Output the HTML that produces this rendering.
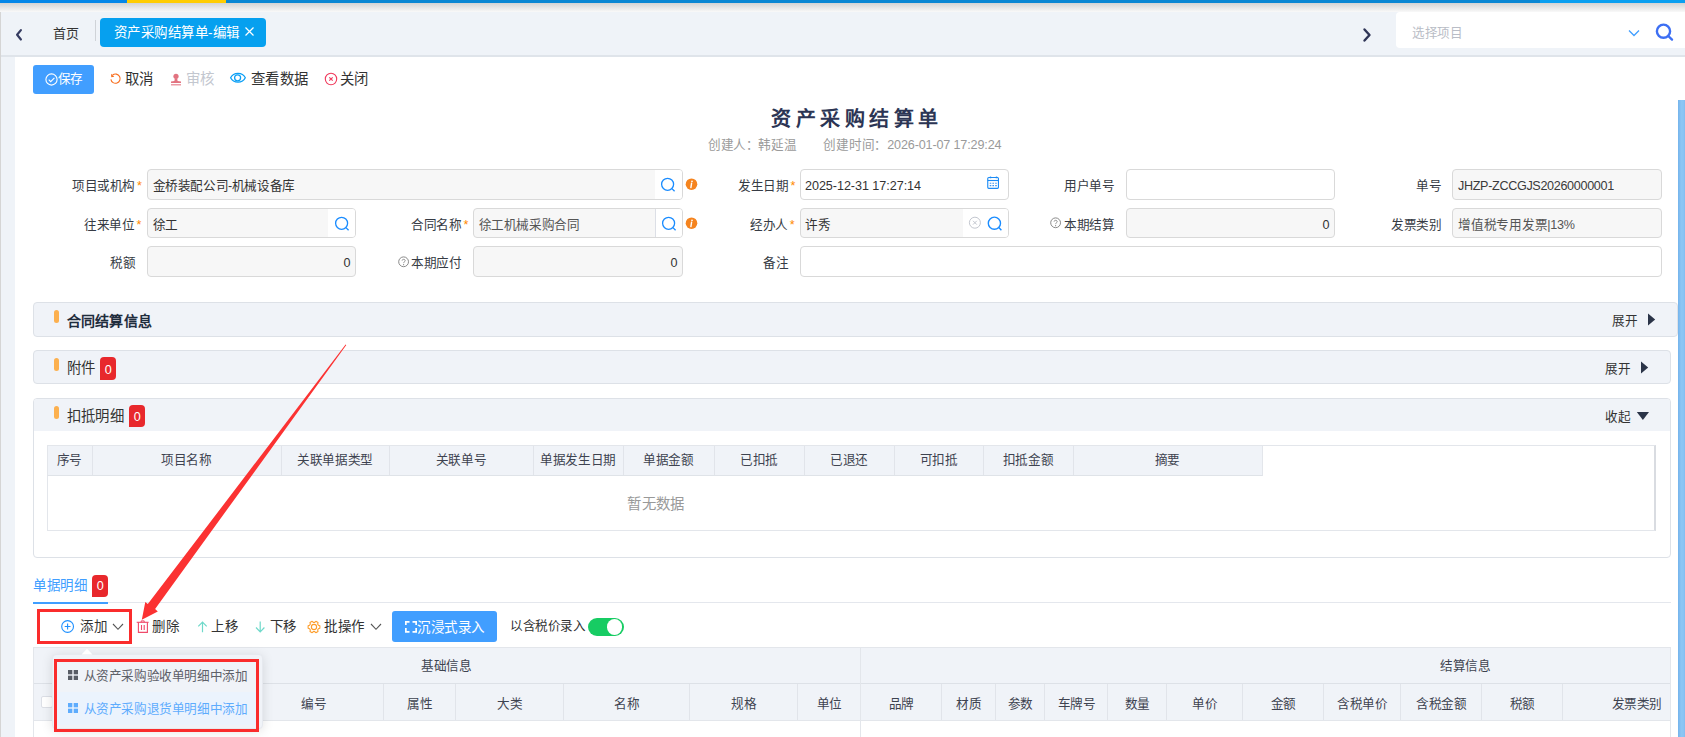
<!DOCTYPE html>
<html lang="zh-CN"><head><meta charset="utf-8">
<style>
html,body{margin:0;padding:0;}
body{width:1685px;height:737px;overflow:hidden;position:relative;background:#eff3f8;font-family:"Liberation Sans",sans-serif;color:#333;}
.a{position:absolute;}
.t{position:absolute;white-space:nowrap;line-height:20px;font-size:12.6px;letter-spacing:-0.4px;}
svg{position:absolute;overflow:visible;}
.inp{position:absolute;box-sizing:border-box;border:1px solid #d9d9d9;border-radius:4px;background:#f7f7f7;overflow:hidden;}
.inp.w{background:#fff;}
.lbl{position:absolute;white-space:nowrap;line-height:20px;font-size:12.6px;letter-spacing:-0.4px;color:#363b44;}
.req{color:#ff8a00;margin-left:2px;}
.th{position:absolute;white-space:nowrap;line-height:20px;font-size:12.6px;letter-spacing:-0.4px;color:#3e4350;}
</style></head><body>
<!-- top bar -->
<div class="a" style="left:0;top:0;width:127px;height:3px;background:#0587e8"></div>
<div class="a" style="left:127px;top:0;width:99px;height:3px;background:#ffcc00"></div>
<div class="a" style="left:226px;top:0;width:1314px;height:3px;background:#0a87d3"></div>
<div class="a" style="left:1540px;top:0;width:145px;height:3px;background:#0a9ff0"></div>
<div class="a" style="left:0;top:3px;width:1685px;height:9px;background:linear-gradient(#d3d3d3,#f9f9f9)"></div>
<div class="a" style="left:0;top:55px;width:1685px;height:2px;background:#dfe4ea"></div>
<div class="a" style="left:0;top:12px;width:1px;height:725px;background:#d5d5d5"></div>
<!-- content -->
<div class="a" style="left:15px;top:57px;width:1670px;height:680px;background:#fff"></div>
<div class="a" style="left:1678px;top:100px;width:7px;height:637px;background:linear-gradient(to right,#74b3ec,#8cc6f4 45%,#8ac5f4 75%,#82bdf0)"></div>

<!-- tab bar -->
<svg style="left:15px;top:28px" width="9" height="14" viewBox="0 0 9 14"><path d="M5.9 2.1 L2.1 6.8 L5.9 11.5" fill="none" stroke="#363c61" stroke-width="2.2" stroke-linecap="round" stroke-linejoin="round"/></svg>
<div class="t" style="left:53px;top:23.5px;font-size:13px;letter-spacing:0px;color:#333">首页</div>
<div class="a" style="left:95px;top:20px;width:1px;height:21px;background:#cfd3d8"></div>
<div class="a" style="left:100px;top:18px;width:166px;height:29px;background:#06a0ef;border-radius:4px"></div>
<div class="t" style="left:113.5px;top:23px;font-size:13.5px;letter-spacing:0.5px;color:#fff">资产采购结算单-编辑</div>
<svg style="left:245px;top:27px" width="9" height="9" viewBox="0 0 9 9"><path d="M0.5 0.5 L8.5 8.5 M8.5 0.5 L0.5 8.5" stroke="#fff" stroke-width="1.2"/></svg>
<svg style="left:1362px;top:28px" width="10" height="14" viewBox="0 0 10 14"><path d="M2.5 1.5 L7.5 7 L2.5 12.5" fill="none" stroke="#2f3556" stroke-width="2.4" stroke-linecap="round" stroke-linejoin="round"/></svg>
<div class="a" style="left:1396px;top:12px;width:289px;height:36px;background:#fff;border-radius:4px 0 0 4px"></div>
<div class="t" style="left:1412px;top:23px;color:#b9bdc6">选择项目</div>
<svg style="left:1628px;top:29px" width="12" height="8" viewBox="0 0 12 8"><path d="M1 1.5 L6 6.5 L11 1.5" fill="none" stroke="#409eff" stroke-width="1.3"/></svg>
<svg style="left:1655px;top:23px" width="19" height="18" viewBox="0 0 19 18"><circle cx="8.5" cy="8.2" r="6.6" fill="none" stroke="#3d6ff3" stroke-width="2.4"/><path d="M13.3 13 L17 16.6" stroke="#3d6ff3" stroke-width="2.4" stroke-linecap="round"/></svg>

<!-- toolbar -->
<div class="a" style="left:33px;top:65px;width:61px;height:29px;background:#419eff;border-radius:3px"></div>
<svg style="left:44.5px;top:72.7px" width="13" height="13" viewBox="0 0 13 13"><circle cx="6.5" cy="6.5" r="5.6" fill="none" stroke="#fff" stroke-width="1.1"/><path d="M3.7 6.6 L5.7 8.6 L9.4 4.8" fill="none" stroke="#fff" stroke-width="1.1"/></svg>
<div class="t" style="left:57.5px;top:69px;letter-spacing:-0.9px;color:#fff">保存</div>
<svg style="left:106px;top:70px" width="20" height="18" viewBox="0 0 20 18"><path d="M4.9 9.4 A4.65 4.65 0 1 0 6.6 5" fill="none" stroke="#f86d1c" stroke-width="1.1"/><path d="M5.0 3.8 L5.3 7.2 L8.3 6.7 Z" fill="#f86d1c"/></svg>
<div class="t" style="left:125px;top:68.5px;font-size:14.4px;letter-spacing:0.4px;color:#333">取消</div>
<svg style="left:170px;top:72.8px" width="12" height="13" viewBox="0 0 12 13"><circle cx="6" cy="3.3" r="2.6" fill="#e27380"/><path d="M4.8 5.5 L7.2 5.5 L7.6 8 L11 8.5 L11 10 L1 10 L1 8.5 L4.4 8 Z" fill="#e27380"/><rect x="1" y="11.3" width="10" height="1.05" fill="#e27380"/></svg>
<div class="t" style="left:186px;top:68.5px;font-size:14.4px;letter-spacing:0.4px;color:#c3c7cf">审核</div>
<svg style="left:226px;top:68px" width="24" height="20" viewBox="0 0 24 20"><path d="M4.6 9.8 C7.5 3.9 16.5 3.9 19.3 9.8 C16.5 15.7 7.5 15.7 4.6 9.8 Z" fill="none" stroke="#0a9ff5" stroke-width="1.25"/><circle cx="11.6" cy="9.8" r="3" fill="none" stroke="#0a9ff5" stroke-width="1.25"/></svg>
<div class="t" style="left:251px;top:68.5px;font-size:14.4px;letter-spacing:0.4px;color:#333">查看数据</div>
<svg style="left:323.7px;top:71.7px" width="14" height="14" viewBox="0 0 14 14"><circle cx="7" cy="7" r="5.7" fill="none" stroke="#f03a5c" stroke-width="1.1"/><path d="M5.3 5.3 L8.7 8.7 M8.7 5.3 L5.3 8.7" stroke="#f03a5c" stroke-width="1.15"/></svg>
<div class="t" style="left:340px;top:68.5px;font-size:14.4px;letter-spacing:0.4px;color:#333">关闭</div>

<!-- title -->
<div class="t" style="left:771px;top:104px;font-size:20px;line-height:30px;font-weight:bold;letter-spacing:4.5px;color:#2c3554">资产采购结算单</div>
<div class="t" style="left:708px;top:135px;color:#9a9a9a">创建人：韩延温</div>
<div class="t" style="left:823px;top:135px;letter-spacing:-0.15px;color:#9a9a9a">创建时间：2026-01-07 17:29:24</div>

<!-- FORM -->
<!-- row labels -->
<div class="lbl" style="left:72px;top:175.5px">项目或机构<span class="req">*</span></div>
<div class="lbl" style="left:738px;top:175.5px">发生日期<span class="req">*</span></div>
<div class="lbl" style="left:1064px;top:175.5px">用户单号</div>
<div class="lbl" style="left:1416px;top:175.5px">单号</div>
<div class="lbl" style="left:84px;top:214.5px">往来单位<span class="req">*</span></div>
<div class="lbl" style="left:411px;top:214.5px">合同名称<span class="req">*</span></div>
<div class="lbl" style="left:750px;top:214.5px">经办人<span class="req">*</span></div>
<div class="lbl" style="left:1064px;top:214.5px">本期结算</div>
<div class="lbl" style="left:1391px;top:214.5px">发票类别</div>
<div class="lbl" style="left:110px;top:252.5px">税额</div>
<div class="lbl" style="left:411px;top:252.5px">本期应付</div>
<div class="lbl" style="left:763px;top:252.5px">备注</div>
<!-- question icons -->
<svg style="left:1050px;top:217px" width="12" height="12" viewBox="0 0 12 12"><circle cx="5.6" cy="5.8" r="4.9" fill="none" stroke="#8a8a8a" stroke-width="1"/><path d="M4.1 4.6 C4.1 2.9 7.2 2.9 7.2 4.6 C7.2 5.8 5.6 5.8 5.6 7.1" fill="none" stroke="#8a8a8a" stroke-width="0.95"/><circle cx="5.6" cy="8.7" r="0.6" fill="#8a8a8a"/></svg>
<svg style="left:398px;top:255.5px" width="12" height="12" viewBox="0 0 12 12"><circle cx="5.6" cy="5.8" r="4.9" fill="none" stroke="#8a8a8a" stroke-width="1"/><path d="M4.1 4.6 C4.1 2.9 7.2 2.9 7.2 4.6 C7.2 5.8 5.6 5.8 5.6 7.1" fill="none" stroke="#8a8a8a" stroke-width="0.95"/><circle cx="5.6" cy="8.7" r="0.6" fill="#8a8a8a"/></svg>

<!-- row 1 inputs -->
<div class="inp" style="left:147px;top:169px;width:536px;height:31px"><div class="a" style="left:507px;top:0;width:28px;height:29px;background:#fff"></div></div>
<div class="t" style="left:152.5px;top:175.5px;color:#333">金桥装配公司-机械设备库</div>
<svg style="left:660px;top:177px" width="16" height="16" viewBox="0 0 16 16"><circle cx="7.6" cy="7.3" r="6" fill="none" stroke="#1a8cff" stroke-width="1.3"/><path d="M11.9 11.6 L14.6 14.3" stroke="#1a8cff" stroke-width="1.3"/></svg>
<svg style="left:685px;top:178px" width="13" height="13" viewBox="0 0 13 13"><circle cx="6.5" cy="6.2" r="5.8" fill="#f5841f"/><path d="M6.6 5.2 L5.9 9.6" stroke="#fff" stroke-width="1.4" stroke-linecap="round"/><circle cx="7" cy="3.3" r="0.85" fill="#fff"/></svg>
<div class="inp w" style="left:800px;top:169px;width:209px;height:31px"></div>
<div class="t" style="left:805px;top:175.5px;letter-spacing:-0.05px;color:#333">2025-12-31 17:27:14</div>
<svg style="left:986px;top:176px" width="14" height="14" viewBox="0 0 14 14"><rect x="1.75" y="1.5" width="10.7" height="10.85" rx="1" fill="none" stroke="#1a8af5" stroke-width="1.1"/><path d="M1.75 4.5 H12.45" stroke="#1a8af5" stroke-width="1.1"/><circle cx="4.5" cy="1.4" r="0.95" fill="#1a8af5"/><circle cx="10.5" cy="1.4" r="0.95" fill="#1a8af5"/><path d="M3.7 7.3 H5.3 M6.4 7.3 H8 M9.2 7.3 H10.8 M3.7 9.6 H5.3 M6.4 9.6 H8 M9.2 9.6 H10.8" stroke="#3a95f0" stroke-width="1.05"/></svg>
<div class="inp w" style="left:1126px;top:169px;width:209px;height:31px"></div>
<div class="inp" style="left:1452px;top:169px;width:210px;height:31px"></div>
<div class="t" style="left:1458px;top:175.5px;letter-spacing:-0.33px;color:#3a3a3a">JHZP-ZCCGJS20260000001</div>

<!-- row 2 inputs -->
<div class="inp" style="left:147px;top:208px;width:209px;height:30px"><div class="a" style="left:180px;top:0;width:28px;height:28px;background:#fff"></div></div>
<div class="t" style="left:152.5px;top:214.5px;color:#333">徐工</div>
<svg style="left:334px;top:216px" width="16" height="16" viewBox="0 0 16 16"><circle cx="7.6" cy="7.3" r="6" fill="none" stroke="#1a8cff" stroke-width="1.3"/><path d="M11.9 11.6 L14.6 14.3" stroke="#1a8cff" stroke-width="1.3"/></svg>
<div class="inp" style="left:473px;top:208px;width:210px;height:30px"><div class="a" style="left:181px;top:0;width:28px;height:28px;background:#fff;border-left:1px solid #dcdfe6"></div></div>
<div class="t" style="left:478.5px;top:214.5px;color:#555">徐工机械采购合同</div>
<svg style="left:661px;top:216px" width="16" height="16" viewBox="0 0 16 16"><circle cx="7.6" cy="7.3" r="6" fill="none" stroke="#1a8cff" stroke-width="1.3"/><path d="M11.9 11.6 L14.6 14.3" stroke="#1a8cff" stroke-width="1.3"/></svg>
<svg style="left:685px;top:217px" width="13" height="13" viewBox="0 0 13 13"><circle cx="6.5" cy="6.2" r="5.8" fill="#f5841f"/><path d="M6.6 5.2 L5.9 9.6" stroke="#fff" stroke-width="1.4" stroke-linecap="round"/><circle cx="7" cy="3.3" r="0.85" fill="#fff"/></svg>
<div class="inp" style="left:800px;top:208px;width:209px;height:30px"><div class="a" style="left:162px;top:0;width:46px;height:28px;background:#fff"></div></div>
<div class="t" style="left:805px;top:214.5px;color:#333">许秀</div>
<svg style="left:968px;top:216px" width="14" height="14" viewBox="0 0 14 14"><circle cx="6.9" cy="6.7" r="5.5" fill="none" stroke="#c3c7cf" stroke-width="1"/><path d="M5 4.8 L8.8 8.6 M8.8 4.8 L5 8.6" stroke="#c3c7cf" stroke-width="1"/></svg>
<svg style="left:987px;top:216px" width="16" height="16" viewBox="0 0 16 16"><circle cx="7.4" cy="7.2" r="6.1" fill="none" stroke="#1a8cff" stroke-width="1.4"/><path d="M11.8 11.6 L14.4 14.2" stroke="#1a8cff" stroke-width="1.4"/></svg>
<div class="inp" style="left:1126px;top:208px;width:209px;height:30px"></div>
<div class="t" style="left:1126px;top:214.5px;width:203px;text-align:right;color:#333">0</div>
<div class="inp" style="left:1452px;top:208px;width:210px;height:30px"></div>
<div class="t" style="left:1458px;top:214.5px;letter-spacing:-0.25px;color:#555">增值税专用发票|13%</div>

<!-- row 3 inputs -->
<div class="inp" style="left:147px;top:246px;width:209px;height:31px"></div>
<div class="t" style="left:147px;top:252.5px;width:203px;text-align:right;color:#333">0</div>
<div class="inp" style="left:473px;top:246px;width:210px;height:31px"></div>
<div class="t" style="left:473px;top:252.5px;width:204px;text-align:right;color:#333">0</div>
<div class="inp w" style="left:800px;top:246px;width:862px;height:31px"></div>
<!-- FORM_END -->

<!-- PANELS -->
<!-- panel 1 -->
<div class="a" style="left:33px;top:302px;width:1645px;height:35px;box-sizing:border-box;background:#f0f3f8;border:1px solid #dde1e7;border-radius:4px"></div>
<div class="a" style="left:54px;top:309.5px;width:4.6px;height:13.5px;background:#fcb04f;border-radius:3px"></div>
<div class="t" style="left:66.5px;top:310.5px;font-size:14px;letter-spacing:0.3px;font-weight:bold;color:#1f2d3d">合同结算信息</div>
<div class="t" style="left:1612px;top:310.5px;color:#333">展开</div>
<svg style="left:1647px;top:313px" width="9" height="13" viewBox="0 0 9 13"><path d="M1 0.5 L8.2 6.5 L1 12.5 Z" fill="#2b3448"/></svg>
<!-- panel 2 -->
<div class="a" style="left:33px;top:350px;width:1638px;height:34px;box-sizing:border-box;background:#f0f3f8;border:1px solid #dde1e7;border-radius:4px"></div>
<div class="a" style="left:54px;top:357.5px;width:4.6px;height:13.5px;background:#fcb04f;border-radius:3px"></div>
<div class="t" style="left:66.5px;top:358px;font-size:14.4px;letter-spacing:0.4px;color:#333">附件</div>
<div class="a" style="left:100px;top:357px;width:16px;height:23px;background:#e8282c;border-radius:4px 4px 4px 0"></div>
<div class="t" style="left:100px;top:359.5px;width:16px;text-align:center;font-size:12.6px;color:#fff">0</div>
<div class="t" style="left:1605px;top:358.5px;color:#333">展开</div>
<svg style="left:1640px;top:361px" width="9" height="13" viewBox="0 0 9 13"><path d="M1 0.5 L8.2 6.5 L1 12.5 Z" fill="#2b3448"/></svg>
<!-- panel 3 -->
<div class="a" style="left:33px;top:398px;width:1638px;height:160px;box-sizing:border-box;background:#fff;border:1px solid #dde1e7;border-radius:4px;overflow:hidden"><div class="a" style="left:0;top:0;width:1636px;height:32px;background:#f0f3f8"></div></div>
<div class="a" style="left:54px;top:405.5px;width:4.6px;height:13.5px;background:#fcb04f;border-radius:3px"></div>
<div class="t" style="left:66.5px;top:406px;font-size:14.4px;letter-spacing:0.4px;color:#333">扣抵明细</div>
<div class="a" style="left:129px;top:405px;width:16px;height:22px;background:#e8282c;border-radius:4px 4px 4px 0"></div>
<div class="t" style="left:129px;top:407px;width:16px;text-align:center;font-size:12.6px;color:#fff">0</div>
<div class="t" style="left:1605px;top:406.5px;color:#333">收起</div>
<svg style="left:1636px;top:411px" width="14" height="10" viewBox="0 0 14 10"><path d="M0.8 1 L13 1 L6.9 9 Z" fill="#2b3448"/></svg>
<!-- table 1 -->
<div class="a" style="left:47px;top:445px;width:1609px;height:86px;box-sizing:border-box;border:1px solid #e3e6eb;border-right:2px solid #d9dce1;background:#fff"></div>
<div class="a" style="left:47px;top:445px;width:1216px;height:31px;box-sizing:border-box;background:#f0f3f8;border:1px solid #e3e6eb;border-bottom-color:#dfe3e8"></div>
<div class="a" style="left:92px;top:446px;width:1px;height:29px;background:#e1e4ea"></div>
<div class="a" style="left:281px;top:446px;width:1px;height:29px;background:#e1e4ea"></div>
<div class="a" style="left:389px;top:446px;width:1px;height:29px;background:#e1e4ea"></div>
<div class="a" style="left:533px;top:446px;width:1px;height:29px;background:#e1e4ea"></div>
<div class="a" style="left:623px;top:446px;width:1px;height:29px;background:#e1e4ea"></div>
<div class="a" style="left:714px;top:446px;width:1px;height:29px;background:#e1e4ea"></div>
<div class="a" style="left:804px;top:446px;width:1px;height:29px;background:#e1e4ea"></div>
<div class="a" style="left:894px;top:446px;width:1px;height:29px;background:#e1e4ea"></div>
<div class="a" style="left:983px;top:446px;width:1px;height:29px;background:#e1e4ea"></div>
<div class="a" style="left:1073px;top:446px;width:1px;height:29px;background:#e1e4ea"></div>
<div class="th" style="left:47px;top:450px;width:45px;text-align:center">序号</div>
<div class="th" style="left:92px;top:450px;width:189px;text-align:center">项目名称</div>
<div class="th" style="left:281px;top:450px;width:108px;text-align:center">关联单据类型</div>
<div class="th" style="left:389px;top:450px;width:144px;text-align:center">关联单号</div>
<div class="th" style="left:533px;top:450px;width:90px;text-align:center">单据发生日期</div>
<div class="th" style="left:623px;top:450px;width:91px;text-align:center">单据金额</div>
<div class="th" style="left:714px;top:450px;width:90px;text-align:center">已扣抵</div>
<div class="th" style="left:804px;top:450px;width:90px;text-align:center">已退还</div>
<div class="th" style="left:894px;top:450px;width:89px;text-align:center">可扣抵</div>
<div class="th" style="left:983px;top:450px;width:90px;text-align:center">扣抵金额</div>
<div class="th" style="left:1073px;top:450px;width:189px;text-align:center">摘要</div>
<div class="t" style="left:600px;top:493.5px;width:112px;text-align:center;font-size:14.4px;letter-spacing:0.4px;color:#999">暂无数据</div>
<!-- PANELS_END -->

<!-- DETAIL -->
<!-- tab -->
<div class="t" style="left:33px;top:576px;font-size:13.5px;letter-spacing:0.5px;color:#409eff">单据明细</div>
<div class="a" style="left:92px;top:575px;width:16px;height:22px;background:#e8282c;border-radius:4px 4px 4px 0"></div>
<div class="t" style="left:92px;top:576px;width:16px;text-align:center;font-size:12.6px;color:#fff">0</div>
<div class="a" style="left:33px;top:602px;width:1638px;height:1px;background:#e4e7ed"></div>
<div class="a" style="left:33px;top:601.5px;width:75px;height:2px;background:#409eff"></div>
<!-- toolbar -->
<svg style="left:61px;top:620px" width="14" height="14" viewBox="0 0 14 14"><circle cx="6.6" cy="6.5" r="5.9" fill="none" stroke="#1e90ff" stroke-width="1.1"/><path d="M6.6 3.6 V9.4 M3.7 6.5 H9.5" stroke="#1e90ff" stroke-width="1.1"/></svg>
<div class="t" style="left:80px;top:617px;font-size:13.5px;letter-spacing:0.5px;color:#333">添加</div>
<svg style="left:112px;top:623px" width="12" height="8" viewBox="0 0 12 8"><path d="M1 1 L6 6.3 L11 1" fill="none" stroke="#555" stroke-width="1.1"/></svg>
<svg style="left:136px;top:619px" width="14" height="15" viewBox="0 0 14 15"><path d="M0.7 3.3 H12.6" stroke="#ef4a6a" stroke-width="1.1"/><path d="M5.2 3.3 V1.9 H8.2 V3.3" fill="none" stroke="#ef4a6a" stroke-width="1"/><path d="M2.4 3.3 V13.4 H11.4 V3.3" fill="none" stroke="#ef4a6a" stroke-width="1.1"/><path d="M5.5 6 V11 M8.2 6 V11" stroke="#ef4a6a" stroke-width="1.1"/></svg>
<div class="t" style="left:152px;top:617px;font-size:13.5px;letter-spacing:0.5px;color:#333">删除</div>
<svg style="left:196.5px;top:620.5px" width="11" height="12" viewBox="0 0 11 12"><path d="M5.5 11.2 V1.2 M1.3 5.3 L5.5 1 L9.7 5.3" fill="none" stroke="#6fd9ca" stroke-width="1.2"/></svg>
<div class="t" style="left:211px;top:617px;font-size:13.5px;letter-spacing:0.5px;color:#333">上移</div>
<svg style="left:255px;top:621px" width="11" height="12" viewBox="0 0 11 12"><path d="M5.2 0.6 V10.6 M1 6.5 L5.2 10.8 L9.4 6.5" fill="none" stroke="#6fd9ca" stroke-width="1.2"/></svg>
<div class="t" style="left:269.5px;top:617px;font-size:13.5px;letter-spacing:0.5px;color:#333">下移</div>
<svg style="left:307px;top:619.7px" width="14" height="14" viewBox="0 0 14 14"><path d="M11.39 5.32 L12.87 5.75 L12.87 8.25 L11.39 8.68 L10.65 9.96 L11.01 11.46 L8.85 12.71 L7.74 11.64 L6.26 11.64 L5.15 12.71 L2.99 11.46 L3.35 9.96 L2.61 8.68 L1.13 8.25 L1.13 5.75 L2.61 5.32 L3.35 4.04 L2.99 2.54 L5.15 1.29 L6.26 2.36 L7.74 2.36 L8.85 1.29 L11.01 2.54 L10.65 4.04 Z" fill="none" stroke="#fd9d2a" stroke-width="1.1" stroke-linejoin="round"/><circle cx="7" cy="7" r="2.6" fill="none" stroke="#fd9d2a" stroke-width="1.1"/></svg>
<div class="t" style="left:324px;top:617px;font-size:13.5px;letter-spacing:0.5px;color:#333">批操作</div>
<svg style="left:370px;top:623px" width="12" height="8" viewBox="0 0 12 8"><path d="M1 1 L6 6.3 L11 1" fill="none" stroke="#555" stroke-width="1.1"/></svg>
<div class="a" style="left:392px;top:611px;width:105px;height:31px;background:#419eff;border-radius:3px"></div>
<svg style="left:404px;top:620px" width="14" height="14" viewBox="0 0 14 14"><path d="M5.5 1.85 H1.85 V4.9 M1.85 8.1 V11.85 H5.5 M8.5 1.85 H12.15 V4.9 M12.15 8.1 V11.85 H8.5" fill="none" stroke="#fff" stroke-width="1.7"/></svg>
<div class="t" style="left:417px;top:618px;font-size:13.5px;letter-spacing:0.5px;color:#fff">沉浸式录入</div>
<div class="t" style="left:510px;top:616px;color:#333">以含税价录入</div>
<div class="a" style="left:588px;top:618px;width:36px;height:18px;background:#17cc63;border-radius:9px"></div>
<div class="a" style="left:607px;top:619.3px;width:15.4px;height:15.4px;background:#fff;border-radius:50%"></div>
<!-- table 2 -->
<div class="a" style="left:33px;top:647px;width:1638px;height:90px;box-sizing:border-box;border:1px solid #e3e6eb;border-bottom:none;background:#fff"></div>
<div class="a" style="left:34px;top:648px;width:1636px;height:72px;background:#f0f3f8"></div>
<div class="a" style="left:34px;top:683px;width:1636px;height:1px;background:#dde1e7"></div>
<div class="a" style="left:34px;top:720px;width:1636px;height:1px;background:#e3e6eb"></div>
<div class="a" style="left:860px;top:648px;width:1px;height:89px;background:#e3e6eb"></div>
<div class="a" style="left:383px;top:684px;width:1px;height:36px;background:#e1e4ea"></div>
<div class="a" style="left:455px;top:684px;width:1px;height:36px;background:#e1e4ea"></div>
<div class="a" style="left:563px;top:684px;width:1px;height:36px;background:#e1e4ea"></div>
<div class="a" style="left:689px;top:684px;width:1px;height:36px;background:#e1e4ea"></div>
<div class="a" style="left:797px;top:684px;width:1px;height:36px;background:#e1e4ea"></div>
<div class="a" style="left:941px;top:684px;width:1px;height:36px;background:#e1e4ea"></div>
<div class="a" style="left:995px;top:684px;width:1px;height:36px;background:#e1e4ea"></div>
<div class="a" style="left:1044px;top:684px;width:1px;height:36px;background:#e1e4ea"></div>
<div class="a" style="left:1107px;top:684px;width:1px;height:36px;background:#e1e4ea"></div>
<div class="a" style="left:1166px;top:684px;width:1px;height:36px;background:#e1e4ea"></div>
<div class="a" style="left:1242px;top:684px;width:1px;height:36px;background:#e1e4ea"></div>
<div class="a" style="left:1323px;top:684px;width:1px;height:36px;background:#e1e4ea"></div>
<div class="a" style="left:1400px;top:684px;width:1px;height:36px;background:#e1e4ea"></div>
<div class="a" style="left:1481px;top:684px;width:1px;height:36px;background:#e1e4ea"></div>
<div class="a" style="left:1562px;top:684px;width:1px;height:36px;background:#e1e4ea"></div>
<div class="th" style="left:245px;top:693.5px;width:138px;text-align:center">编号</div>
<div class="th" style="left:384px;top:693.5px;width:72px;text-align:center">属性</div>
<div class="th" style="left:456px;top:693.5px;width:108px;text-align:center">大类</div>
<div class="th" style="left:564px;top:693.5px;width:126px;text-align:center">名称</div>
<div class="th" style="left:690px;top:693.5px;width:108px;text-align:center">规格</div>
<div class="th" style="left:798px;top:693.5px;width:63px;text-align:center">单位</div>
<div class="th" style="left:861px;top:693.5px;width:81px;text-align:center">品牌</div>
<div class="th" style="left:942px;top:693.5px;width:54px;text-align:center">材质</div>
<div class="th" style="left:996px;top:693.5px;width:49px;text-align:center">参数</div>
<div class="th" style="left:1045px;top:693.5px;width:63px;text-align:center">车牌号</div>
<div class="th" style="left:1108px;top:693.5px;width:59px;text-align:center">数量</div>
<div class="th" style="left:1167px;top:693.5px;width:76px;text-align:center">单价</div>
<div class="th" style="left:1243px;top:693.5px;width:81px;text-align:center">金额</div>
<div class="th" style="left:1324px;top:693.5px;width:77px;text-align:center">含税单价</div>
<div class="th" style="left:1401px;top:693.5px;width:81px;text-align:center">含税金额</div>
<div class="th" style="left:1482px;top:693.5px;width:81px;text-align:center">税额</div>
<div class="th" style="left:1611.5px;top:693.5px">发票类别</div>
<div class="th" style="left:421px;top:655.5px">基础信息</div>
<div class="th" style="left:1440px;top:655.5px">结算信息</div>
<div class="a" style="left:41px;top:696px;width:12px;height:12px;box-sizing:border-box;border:1px solid #dcdfe6;border-radius:2px;background:#fff"></div>
<!-- dropdown -->
<div class="a" style="left:52px;top:654px;width:211px;height:75px;box-sizing:border-box;background:#f0f3f8;border:1px solid #e6e9ef;border-radius:4px;box-shadow:0 2px 12px rgba(0,0,0,0.12)"></div>
<svg style="left:81px;top:648px" width="12" height="7" viewBox="0 0 12 7"><path d="M0.5 6.5 L6 0.8 L11.5 6.5 Z" fill="#ffffff"/></svg>
<div class="a" style="left:57px;top:692px;width:199px;height:33px;background:#ebf3fd"></div>
<svg style="left:68px;top:670px" width="10" height="10" viewBox="0 0 10 10"><rect x="0" y="0" width="4.3" height="4.3" fill="#595d66"/><rect x="5.7" y="0" width="4.3" height="4.3" fill="#595d66"/><rect x="0" y="5.7" width="4.3" height="4.3" fill="#595d66"/><rect x="5.7" y="5.7" width="4.3" height="4.3" fill="#595d66"/></svg>
<div class="t" style="left:83.5px;top:665.5px;color:#5e6169">从资产采购验收单明细中添加</div>
<svg style="left:68px;top:703px" width="10" height="10" viewBox="0 0 10 10"><rect x="0" y="0" width="4.3" height="4.3" fill="#5eacfd"/><rect x="5.7" y="0" width="4.3" height="4.3" fill="#5eacfd"/><rect x="0" y="5.7" width="4.3" height="4.3" fill="#5eacfd"/><rect x="5.7" y="5.7" width="4.3" height="4.3" fill="#5eacfd"/></svg>
<div class="t" style="left:83.5px;top:698.5px;color:#5eacfd">从资产采购退货单明细中添加</div>
<!-- annotations -->
<div class="a" style="left:37px;top:609px;width:95px;height:35px;box-sizing:border-box;border:3px solid #fa2c2c"></div>
<div class="a" style="left:54px;top:659px;width:205px;height:73px;box-sizing:border-box;border:3px solid #fa2c2c"></div>
<svg style="left:0;top:0" width="1685" height="737" viewBox="0 0 1685 737"><path d="M346.3 345 L345.6 344.6 L147.8 604 L145.3 602.1 L141.8 619.7 L157.8 611.6 L155.1 608.9 Z" fill="#fb3232"/></svg>
<!-- DETAIL_END -->
</body></html>
